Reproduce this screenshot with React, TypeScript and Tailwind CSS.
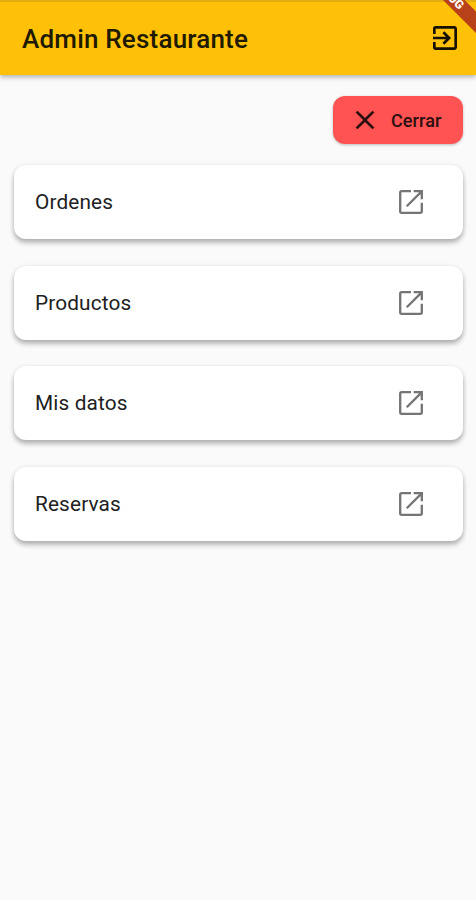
import { MdClose, MdExitToApp } from 'react-icons/md';

const menuItems = ['Ordenes', 'Productos', 'Mis datos', 'Reservas'];

const OpenIcon = () => (
  <svg viewBox="0 0 24 24" className="size-8" fill="none" stroke="#757575" strokeWidth="1.75">
    <path d="M12 3.9H5Q3.9 3.9 3.9 5V19Q3.9 20.1 5 20.1H19Q20.1 20.1 20.1 19V12.5" />
    <path d="M14 3.9H20.1V10M20 4L8.8 15.2" />
  </svg>
);

const MenuCard = ({ title }: { title: string }) => (
  <button className="flex h-[74px] w-full items-center justify-between rounded-[12px] bg-white pl-[21px] pr-[36px] text-left text-[20.8px] tracking-[0.14px] shadow-[0_4px_5px_rgba(0,0,0,0.24),0_1px_5px_rgba(0,0,0,0.12)]">
    <span className="pt-0.5">{title}</span>
    <OpenIcon />
  </button>
);

// Only the tail of the ribbon fits in the corner
const DebugBanner = () => (
  <svg viewBox="0 0 36 40" className="absolute right-0 top-0 h-10 w-9">
    <path d="M3 0H24.5L36 11.5V33Z" fill="#b9411a" />
    <text
      x="19"
      y="10.1"
      transform="rotate(45 19 10.1)"
      textAnchor="end"
      fill="#fff"
      fontFamily="Roboto"
      fontWeight="900"
      fontSize="12"
    >
      UG
    </text>
  </svg>
);

export default function App() {
  return (
    <div className="relative min-h-screen overflow-hidden bg-[#fafafa] font-['Roboto',sans-serif] text-[#212121]">
      <header className="flex h-[75px] items-center justify-between border-t-2 border-[#e3ac12] bg-[#ffc107] pb-px pl-[22px] pr-[15px] shadow-[0_2px_5px_rgba(0,0,0,0.3)]">
        <h1 className="pt-0.5 text-[26px] font-medium tracking-[0.2px] text-[#211a03]">Admin Restaurante</h1>
        <MdExitToApp className="size-8 text-[#161003]" />
      </header>
      <main className="px-[13px] pt-[21px]">
        <div className="flex justify-end">
          <button className="flex h-[48px] w-[130px] items-center rounded-[12px] bg-[#ff5252] pl-[16px] text-[18px] font-medium tracking-[0.1px] text-[#2a1010] shadow-[0_1px_3px_rgba(0,0,0,0.25)]">
            <MdClose className="mr-[10px] size-8" />
            Cerrar
          </button>
        </div>
        <div className="mt-[21px] flex flex-col gap-[26.5px] pl-px">
          {menuItems.map((item) => (
            <MenuCard key={item} title={item} />
          ))}
        </div>
      </main>
      <DebugBanner />
    </div>
  );
}
